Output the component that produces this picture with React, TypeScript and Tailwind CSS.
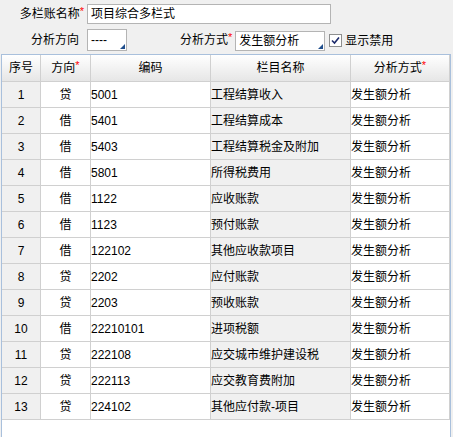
import React from "react";

type Row = { no: number; dir: string; code: string; name: string; method: string };

const ROWS: Row[] = [
  { no: 1, dir: "贷", code: "5001", name: "工程结算收入", method: "发生额分析" },
  { no: 2, dir: "借", code: "5401", name: "工程结算成本", method: "发生额分析" },
  { no: 3, dir: "借", code: "5403", name: "工程结算税金及附加", method: "发生额分析" },
  { no: 4, dir: "借", code: "5801", name: "所得税费用", method: "发生额分析" },
  { no: 5, dir: "借", code: "1122", name: "应收账款", method: "发生额分析" },
  { no: 6, dir: "借", code: "1123", name: "预付账款", method: "发生额分析" },
  { no: 7, dir: "借", code: "122102", name: "其他应收款项目", method: "发生额分析" },
  { no: 8, dir: "贷", code: "2202", name: "应付账款", method: "发生额分析" },
  { no: 9, dir: "贷", code: "2203", name: "预收账款", method: "发生额分析" },
  { no: 10, dir: "借", code: "22210101", name: "进项税额", method: "发生额分析" },
  { no: 11, dir: "贷", code: "222108", name: "应交城市维护建设税", method: "发生额分析" },
  { no: 12, dir: "贷", code: "222113", name: "应交教育费附加", method: "发生额分析" },
  { no: 13, dir: "贷", code: "224102", name: "其他应付款-项目", method: "发生额分析" },
];

const Star = () => <span className="relative -top-[3px] text-[11px] text-[#ff0000]">*</span>;

function ComboArrow() {
  return (
    <svg className="absolute bottom-[1px] right-[1px]" width="5" height="5" viewBox="0 0 5 5">
      <path d="M5 0V5H0Z" fill="#1f4e8c" />
    </svg>
  );
}

const cell = "flex items-center border-r border-[#d0d0d0]";
const cols = "grid-cols-[39px_50px_120px_140px_99px]";

export default function App() {
  return (
    <div
      className="relative flex h-[437px] w-[453px] flex-col overflow-hidden bg-[#f0f0f0] text-[12px] text-black"
      style={{ fontFamily: '"Liberation Sans", "Noto Sans CJK SC", sans-serif' }}
    >
      {/* Form */}
      <div className="flex h-[29px] items-start pt-[4px]">
        <div className="flex h-[20px] w-[84px] items-center justify-end">
          多栏账名称<Star />
        </div>
        <div className="ml-[3px] flex h-[20px] w-[244px] items-center border border-[#b4b4b4] bg-white pl-[3px]">
          项目综合多栏式
        </div>
      </div>
      <div className="flex h-[25px] items-start">
        <div className="flex h-[22px] w-[79px] items-center justify-end">分析方向</div>
        <div className="relative ml-[8px] flex h-[22px] w-[40px] items-center border border-[#b4b4b4] bg-white pl-[3px] leading-none">
          ----
          <ComboArrow />
        </div>
        <div className="ml-[53px] flex h-[22px] items-center">
          分析方式<Star />
        </div>
        <div className="relative ml-[3px] mt-[2px] flex h-[20px] w-[90px] items-center border border-[#b4b4b4] bg-white pl-[3px]">
          发生额分析
          <ComboArrow />
        </div>
        <div className="ml-[4px] mt-[5px] flex h-[13px] w-[13px] items-center justify-center border border-[#8e8f8f] bg-white">
          <svg width="9" height="9" viewBox="0 0 9 9">
            <path d="M1 4.5L3.5 7L8 1.5" fill="none" stroke="#1c2a6b" strokeWidth="1.6" />
          </svg>
        </div>
        <div className="ml-[3px] mt-[2px] flex h-[20px] items-center">显示禁用</div>
      </div>

      {/* Grid */}
      <div className="ml-[1px] flex w-[450px] flex-1 flex-col border-x border-t border-[#a9c0dc] bg-white">
        <div className={`grid h-[27px] ${cols} border-b border-[#d0d0d0] bg-gradient-to-b from-white to-[#e6e6e6]`}>
          <div className={`${cell} justify-center`}>序号</div>
          <div className={`${cell} justify-center`}>
            方向<Star />
          </div>
          <div className={`${cell} justify-center`}>编码</div>
          <div className={`${cell} justify-center`}>栏目名称</div>
          <div className={`${cell} justify-center`}>
            分析方式<Star />
          </div>
        </div>
        {ROWS.map((r) => (
          <div key={r.no} className={`grid h-[26px] ${cols} border-b border-[#d0d0d0]`}>
            <div className={`${cell} justify-center bg-[#f0f0f0]`}>{r.no}</div>
            <div className={`${cell} justify-center`}>{r.dir}</div>
            <div className={cell}>{r.code}</div>
            <div className={`${cell} bg-[#f0f0f0]`}>{r.name}</div>
            <div className={cell}>{r.method}</div>
          </div>
        ))}
      </div>
    </div>
  );
}
